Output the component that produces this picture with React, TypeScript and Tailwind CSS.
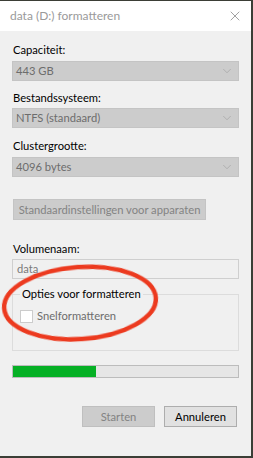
import { ChevronDown, X } from 'lucide-react';

function Combo({ value }: { value: string }) {
  return (
    <div className="flex items-center justify-between h-[20px] bg-[#cccccc] border border-[#c4c4c4] pl-[3px] pr-[4px] text-[#6d6d6d]">
      <span>{value}</span>
      <ChevronDown className="w-[14px] h-[14px] text-[#a0a0a0]" strokeWidth={1.1} />
    </div>
  );
}

export default function App() {
  return (
    <div className="w-[253px] h-[458px] bg-[#3b3e36] pt-px">
      <div
        className="relative w-[251px] h-[455px] bg-[#f0f0f0] text-[11.2px] leading-[16px] text-black whitespace-nowrap"
        style={{ fontFamily: 'Lato, "Open Sans", sans-serif' }}
      >
        <div className="flex items-center justify-between h-[30px] bg-white pl-[10px] pr-[8px]">
          <span className="text-[12px] text-[#9a9a9a]">data (D:) formatteren</span>
          <X className="w-[16px] h-[16px] text-[#8a8a8a]" strokeWidth={1.2} />
        </div>

        <div className="px-[12px] pt-[11px]">
          <div className="pl-px">Capaciteit:</div>
          <div className="mt-[3px]"><Combo value="443 GB" /></div>

          <div className="mt-[9px] pl-px">Bestandssysteem:</div>
          <div className="mt-[2px]"><Combo value="NTFS (standaard)" /></div>

          <div className="mt-[10px] pl-px">Clustergrootte:</div>
          <div className="mt-[3px]"><Combo value="4096 bytes" /></div>

          <button className="block mt-[22px] ml-px h-[21px] w-[193px] bg-[#cccccc] border border-[#c4c4c4] text-[#838383] leading-[16px]">
            Standaardinstellingen voor apparaten
          </button>

          <div className="mt-[21px] pl-px">Volumenaam:</div>
          <div className="mt-[2px] h-[20px] border border-[#cfcfcf] bg-[#f0f0f0] pl-[4px] text-[#7a7a7a] flex items-center">
            data
          </div>

          <div className="relative mt-[15px] h-[57px] border border-[#dcdcdc]">
            <div className="absolute -top-[9px] left-[7px] bg-[#f0f0f0] px-[2px]">Opties voor formatteren</div>
            <div className="flex items-center gap-[4px] pl-[7px] pt-[13px]">
              <div className="w-[13px] h-[13px] bg-white border border-[#cccccc]" />
              <span className="text-[#6d6d6d]">Snelformatteren</span>
            </div>
          </div>

          <div className="mt-[14px] h-[13px] border border-[#bcbcbc] bg-[#e6e6e6]">
            <div className="h-full w-[83px] bg-[#06b025]" />
          </div>

          <div className="mt-[28px] flex justify-end gap-[9px] pr-[2px]">
            <button className="w-[73px] h-[21px] bg-[#cccccc] border border-[#bfbfbf] text-[#838383] leading-[16px]">
              Starten
            </button>
            <button className="w-[73px] h-[21px] bg-[#e1e1e1] border border-[#adadad] text-black leading-[16px]">
              Annuleren
            </button>
          </div>
        </div>

        <svg
          className="absolute left-0 top-[258px] pointer-events-none"
          width="165"
          height="90"
          viewBox="0 0 165 90"
        >
          <ellipse
            cx="80"
            cy="44"
            rx="76"
            ry="36"
            transform="rotate(-4 80 44)"
            fill="none"
            stroke="#ec3a1f"
            strokeWidth="4.5"
            style={{ filter: 'blur(0.6px)' }}
          />
        </svg>
      </div>
    </div>
  );
}
